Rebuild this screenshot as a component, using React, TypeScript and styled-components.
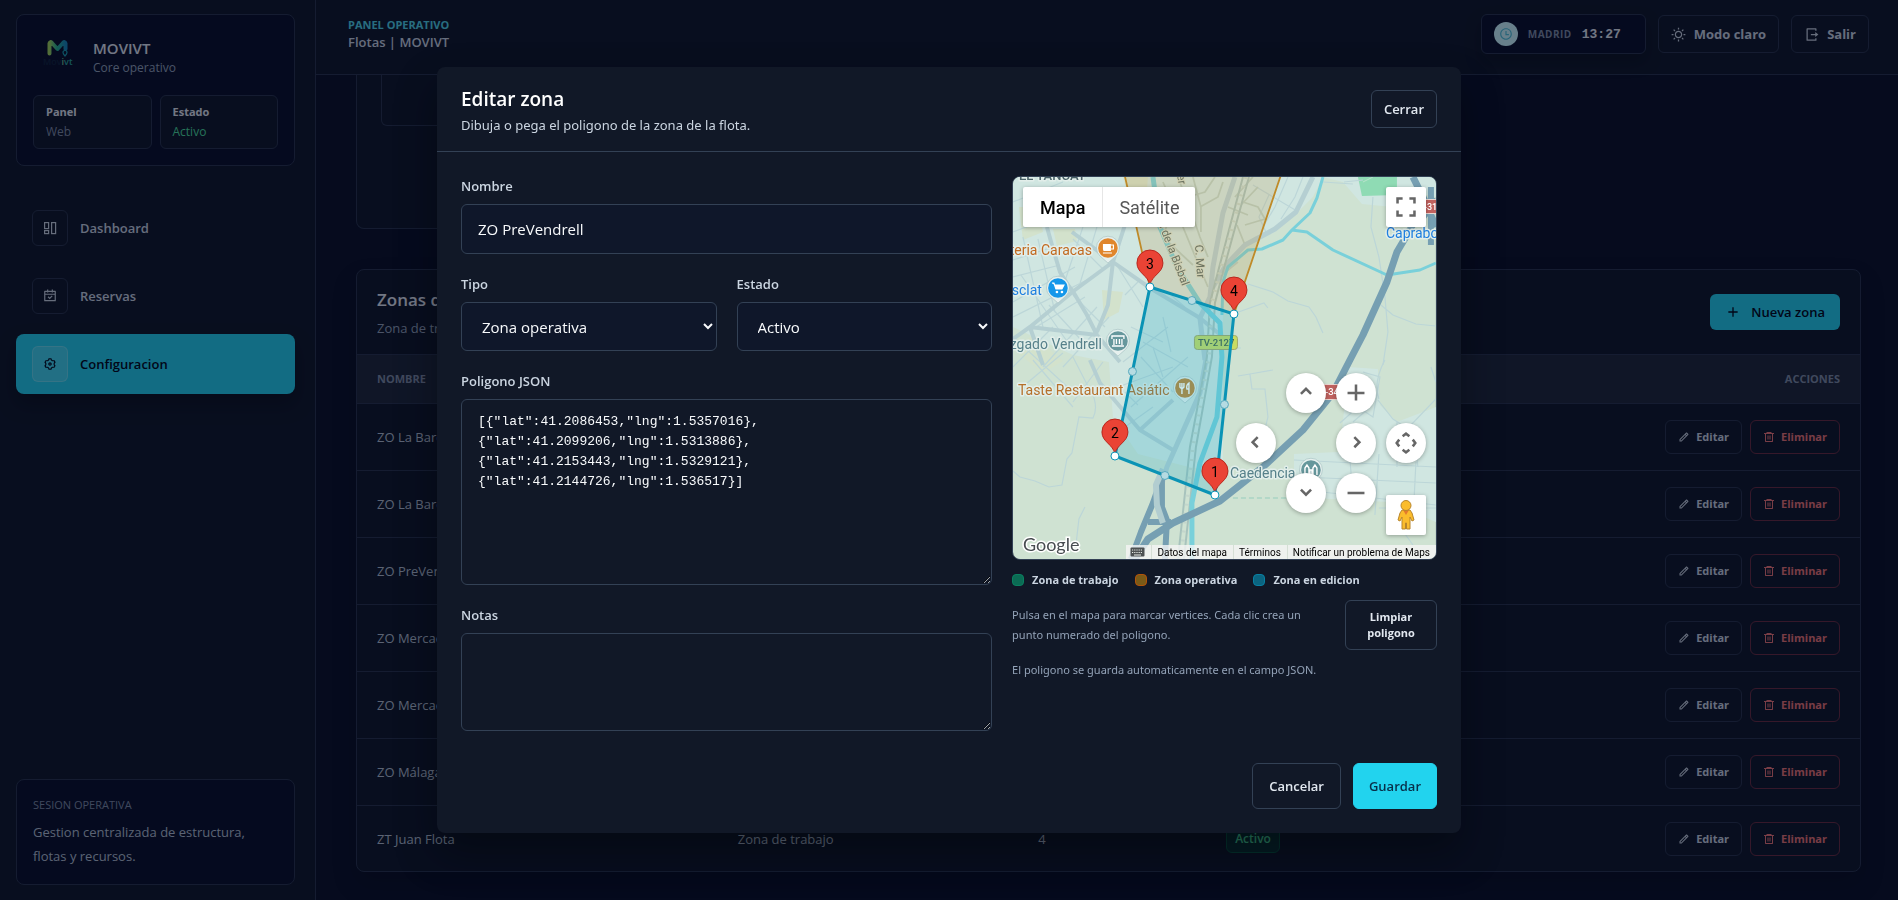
import { FC, ReactNode, useState } from 'react';
import styled, { createGlobalStyle, css } from 'styled-components';
import {
    RiAddLine,
    RiCalendarCheckLine,
    RiDeleteBin6Line,
    RiLogoutBoxRLine,
    RiPencilLine,
    RiSettings3Line,
    RiSunLine,
    RiTimeLine,
} from 'react-icons/ri';

type Zone = {
    id: number;
    name: string;
    type: string;
    points: number;
    status: string;
};

type Point = { x: number; y: number };

const colors = {
    page: '#0a1024',
    surface: '#0f1726',
    panel: '#080f27',
    modal: '#111827',
    field: '#0f172a',
    head: '#1e2737',
    border: '#28334a',
    fieldBorder: '#334155',
    text: '#e2e8f0',
    soft: '#cbd5e1',
    cell: '#b4c0d0',
    muted: '#94a3b8',
    dim: '#7f8ca3',
    accent: '#22d3ee',
    danger: '#ee7474',
    success: '#4ade9b',
};

const fonts = {
    body: "'Open Sans', 'Noto Sans', sans-serif",
    wide: "'Noto Sans', 'Open Sans', sans-serif",
    mono: "'Liberation Mono', monospace",
    map: 'Roboto, sans-serif',
};

const GlobalStyle = createGlobalStyle`
    * {
        box-sizing: border-box;
    }

    body {
        margin: 0;
        background-color: ${colors.page};
        color: ${colors.text};
        font-family: ${fonts.body};
        font-size: 13px;
    }

    button,
    input,
    select,
    textarea {
        font-family: inherit;
    }

    p,
    h1,
    h2 {
        margin: 0;
    }
`;

const Layout = styled.div`
    display: flex;
    height: 100vh;
    overflow: hidden;
`;

const Sidebar = styled.aside`
    display: flex;
    flex-direction: column;
    flex: 0 0 316px;
    padding: 14px 20px 15px 16px;
    border-right: 1px solid ${colors.border};
    background-color: ${colors.surface};
`;

const SideCard = styled.section`
    padding: 16px;
    border: 1px solid ${colors.border};
    border-radius: 8px;
    background-color: ${colors.panel};
`;

const Brand = styled.div`
    display: flex;
    align-items: center;
    gap: 12px;
    height: 48px;
    margin-bottom: 16px;
`;

const BrandText = styled.div`
    padding-top: 4px;
`;

const BrandName = styled.p`
    font-size: 15px;
    font-weight: 600;
    line-height: 22px;
`;

const BrandNote = styled.p`
    color: ${colors.muted};
    font-size: 12px;
    line-height: 18px;
`;

const Stats = styled.div`
    display: grid;
    grid-template-columns: 1fr 1fr;
    gap: 8px;
`;

const Stat = styled.div<{ $color: string }>`
    padding: 6px 12px;
    border: 1px solid ${colors.border};
    border-radius: 6px;
    background-color: ${colors.surface};
    font-size: 12px;
    line-height: 20px;
    color: ${(props) => props.$color};

    strong {
        display: block;
        color: ${colors.text};
        font-size: 11px;
        font-weight: 700;
    }
`;

const Nav = styled.nav`
    display: flex;
    flex-direction: column;
    gap: 8px;
    margin-top: 32px;
`;

const NavLink = styled.a<{ $active?: boolean }>`
    display: flex;
    align-items: center;
    gap: 12px;
    padding: 12px 16px;
    border-radius: 8px;
    background-color: ${(props) => (props.$active ? colors.accent : 'transparent')};
    box-shadow: ${(props) => (props.$active ? '0 10px 20px rgba(0, 0, 0, 0.3)' : 'none')};
    color: ${(props) => (props.$active ? '#020617' : colors.soft)};
    font-size: 13px;
    font-weight: 600;
    text-decoration: none;
`;

const NavIcon = styled.span<{ $active?: boolean }>`
    display: grid;
    place-items: center;
    width: 36px;
    height: 36px;
    border: 1px solid ${(props) => (props.$active ? 'rgba(255, 255, 255, 0.2)' : colors.border)};
    border-radius: 6px;
    background-color: ${(props) => (props.$active ? 'rgba(255, 255, 255, 0.15)' : 'transparent')};
    font-size: 14px;
`;

const Session = styled(SideCard)`
    margin-top: auto;
`;

const SessionTitle = styled.p`
    margin-bottom: 6px;
    color: ${colors.dim};
    font-size: 11px;
    line-height: 18px;
`;

const SessionText = styled.p`
    color: ${colors.cell};
    font-size: 13px;
    line-height: 24px;
`;

const Content = styled.div`
    display: flex;
    flex-direction: column;
    flex: 1;
    min-width: 0;
`;

const Topbar = styled.header`
    display: flex;
    align-items: center;
    justify-content: space-between;
    min-height: 75px;
    padding: 14px 29px 20px 32px;
    border-bottom: 1px solid ${colors.border};
    background-color: ${colors.surface};
`;

const PageName = styled.div`
    padding-bottom: 2px;
`;

const Eyebrow = styled.p`
    color: #4fd5e8;
    font-size: 11px;
    font-weight: 700;
    line-height: 17px;
`;

const Crumb = styled.p`
    color: ${colors.soft};
    font-size: 13px;
    font-weight: 600;
    line-height: 18px;
`;

const TopActions = styled.div`
    display: flex;
    align-items: center;
    gap: 12px;
`;

const Clock = styled.div`
    display: flex;
    align-items: center;
    gap: 10px;
    width: 165px;
    height: 40px;
    padding: 0 12px;
    border: 1px solid ${colors.border};
    border-radius: 6px;
    background-color: ${colors.panel};
    box-shadow: 0 8px 16px rgba(0, 0, 0, 0.25);

    small {
        color: ${colors.dim};
        font-size: 10px;
        font-weight: 700;
        letter-spacing: 0.5px;
    }

    time {
        font-family: ${fonts.mono};
        font-size: 13px;
        font-weight: 700;
    }
`;

const ClockBadge = styled.span`
    display: grid;
    place-items: center;
    width: 24px;
    height: 24px;
    border-radius: 50%;
    background-color: #cffafe;
    color: #4fc3d9;
    font-size: 14px;
`;

const buttonBase = css`
    display: inline-flex;
    align-items: center;
    justify-content: center;
    border: 1px solid ${colors.fieldBorder};
    border-radius: 6px;
    background-color: transparent;
    color: ${colors.soft};
    font-size: 13px;
    font-weight: 600;
    cursor: pointer;
`;

const TopButton = styled.button`
    ${buttonBase}
    gap: 8px;
    height: 38px;
    padding: 0 12px;
    border-color: ${colors.border};
    font-weight: 700;

    svg {
        font-size: 15px;
    }
`;

const Main = styled.main`
    display: flex;
    flex-direction: column;
    gap: 40px;
    padding: 0 37px 28px 40px;
    overflow: hidden;
`;

const UpperCard = styled.section`
    width: 60%;
    height: 154px;
    padding: 0 24px;
    border: 1px solid ${colors.border};
    border-top: 0;
    border-radius: 0 0 8px 8px;
    background-color: ${colors.surface};
`;

const UpperInner = styled.div`
    height: 51px;
    border: 1px solid ${colors.border};
    border-top: 0;
    border-radius: 0 0 6px 6px;
`;

const TableCard = styled.section`
    border: 1px solid ${colors.border};
    border-radius: 8px;
    background-color: ${colors.surface};
    box-shadow: 0 12px 24px rgba(0, 0, 0, 0.2);
    overflow: hidden;
`;

const TableHeader = styled.div`
    display: flex;
    align-items: center;
    justify-content: space-between;
    padding: 16px 20px;
`;

const TableTitle = styled.h2`
    font-size: 17px;
    font-weight: 600;
    line-height: 28px;
`;

const TableNote = styled.p`
    margin-top: 4px;
    color: ${colors.muted};
    font-size: 13px;
    line-height: 20px;
`;

const NewButton = styled.button`
    ${buttonBase}
    gap: 10px;
    height: 36px;
    padding: 0 15px;
    border: 0;
    background-color: ${colors.accent};
    color: #020617;

    svg {
        font-size: 16px;
    }
`;

const Table = styled.table`
    width: 100%;
    border-collapse: collapse;
    table-layout: fixed;

    th,
    td {
        padding: 0 20px;
        text-align: left;
    }

    th {
        height: 49px;
        border-top: 1px solid ${colors.border};
        background-color: ${colors.head};
        color: ${colors.dim};
        font-size: 11px;
        font-weight: 700;
    }

    td {
        height: 67px;
        border-top: 1px solid ${colors.border};
        color: ${colors.cell};
        font-size: 13px;
    }

    th:last-child {
        text-align: right;
    }
`;

const Status = styled.span`
    display: inline-block;
    padding: 4px 8px;
    border: 1px solid #06573f;
    border-radius: 6px;
    background-color: #082f2e;
    color: ${colors.success};
    font-size: 12px;
    font-weight: 600;
    line-height: 18px;
`;

const RowActions = styled.div`
    display: flex;
    justify-content: flex-end;
    gap: 8px;
`;

const RowButton = styled.button<{ $danger?: boolean }>`
    ${buttonBase}
    gap: 6px;
    height: 34px;
    padding: 0 12px;
    border-color: ${(props) => (props.$danger ? '#6b2b3c' : colors.border)};
    color: ${(props) => (props.$danger ? colors.danger : colors.soft)};
    font-size: 11px;
    font-weight: 700;

    svg {
        font-size: 12px;
    }
`;

const Overlay = styled.div`
    position: fixed;
    inset: 0;
    display: flex;
    align-items: center;
    justify-content: center;
    background-color: rgba(2, 6, 23, 0.5);
`;

const Modal = styled.section`
    width: 100%;
    max-width: 1024px;
    border-radius: 8px;
    background-color: ${colors.modal};
    box-shadow: 0 20px 40px rgba(0, 0, 0, 0.35);
`;

const ModalHeader = styled.header`
    display: flex;
    align-items: center;
    justify-content: space-between;
    padding: 16px 24px;
    border-bottom: 1px solid ${colors.fieldBorder};
`;

const ModalTitle = styled.h1`
    color: #fff;
    font-size: 19px;
    font-weight: 600;
    line-height: 32px;
`;

const ModalNote = styled.p`
    color: ${colors.soft};
    font-family: ${fonts.wide};
    font-size: 13px;
    line-height: 20px;
`;

const CloseButton = styled.button`
    ${buttonBase}
    height: 38px;
    padding: 0 12px;
    color: ${colors.text};
`;

const ModalForm = styled.form`
    padding: 24px;
`;

const Columns = styled.div`
    display: grid;
    grid-template-columns: minmax(0, 5fr) minmax(0, 4fr);
    gap: 20px;
`;

const Fields = styled.div`
    display: grid;
    grid-template-columns: 1fr 1fr;
    align-content: start;
    gap: 20px;
`;

const Field = styled.div<{ $wide?: boolean }>`
    display: flex;
    flex-direction: column;
    gap: 8px;
    grid-column: ${(props) => (props.$wide ? '1 / -1' : 'auto')};
`;

const Label = styled.label`
    color: ${colors.soft};
    font-size: 13px;
    font-weight: 600;
    line-height: 20px;
`;

const fieldBase = css`
    width: 100%;
    padding: 12px 16px;
    border: 1px solid ${colors.fieldBorder};
    border-radius: 6px;
    background-color: ${colors.field};
    color: #f8fafc;
    font-size: 15px;

    &:focus {
        outline: 2px solid ${colors.accent};
    }
`;

const Input = styled.input`
    ${fieldBase}
    height: 50px;
`;

const Select = styled.select`
    ${fieldBase}
    height: 49px;
`;

const TextArea = styled.textarea<{ $height: number; $mono?: boolean }>`
    ${fieldBase}
    display: block;
    height: ${(props) => props.$height}px;
    background-color: ${colors.modal};
    font-family: ${(props) => (props.$mono ? fonts.mono : fonts.body)};
    font-size: 13px;
    line-height: 20px;
    resize: vertical;
`;

const MapColumn = styled.div`
    display: flex;
    flex-direction: column;
    gap: 12px;
`;

const Legend = styled.ul`
    display: flex;
    gap: 16px;
    margin: 0;
    padding: 0;
    list-style: none;
    color: ${colors.soft};
    font-size: 11px;
    font-weight: 700;
    line-height: 16px;

    li {
        display: flex;
        align-items: center;
        gap: 8px;
    }
`;

const Swatch = styled.span<{ $fill: string; $border: string }>`
    width: 12px;
    height: 12px;
    border: 1px solid ${(props) => props.$border};
    border-radius: 4px;
    background-color: ${(props) => props.$fill};
`;

const HintRow = styled.div`
    display: flex;
    align-items: center;
    justify-content: space-between;
    gap: 24px;
`;

const Hint = styled.p`
    color: ${colors.muted};
    font-family: ${fonts.wide};
    font-size: 11px;
    line-height: 20px;
`;

const HintEnd = styled(Hint)`
    line-height: 16px;
`;

const ClearButton = styled.button`
    ${buttonBase}
    flex: 0 0 92px;
    height: 50px;
    color: ${colors.text};
    font-size: 11px;
    font-weight: 700;
    line-height: 16px;
`;

const ModalFooter = styled.footer`
    display: flex;
    justify-content: flex-end;
    gap: 12px;
    margin-top: 32px;
`;

const FooterButton = styled.button<{ $primary?: boolean }>`
    ${buttonBase}
    height: 46px;
    padding: 0 ${(props) => (props.$primary ? 15 : 16)}px;
    border-color: ${(props) => (props.$primary ? colors.accent : colors.fieldBorder)};
    background-color: ${(props) => (props.$primary ? colors.accent : 'transparent')};
    color: ${(props) => (props.$primary ? '#082f49' : colors.text)};
`;

const MapFrame = styled.div`
    position: relative;
    height: 384px;
    border: 1px solid ${colors.fieldBorder};
    border-radius: 8px;
    overflow: hidden;
    font-family: ${fonts.map};
`;

const MapDrawing = styled.svg`
    display: block;
    width: 100%;
    height: 100%;
`;

const MapTypes = styled.div`
    position: absolute;
    top: 10px;
    left: 10px;
    display: flex;
    border-radius: 2px;
    background-color: #fff;
    box-shadow: 0 1px 4px rgba(0, 0, 0, 0.3);
`;

const MapType = styled.button<{ $active?: boolean }>`
    height: 40px;
    padding: 0 ${(props) => (props.$active ? 17 : 16)}px;
    border: 0;
    border-left: ${(props) => (props.$active ? '0' : '1px solid #e6e6e6')};
    background-color: transparent;
    color: ${(props) => (props.$active ? '#000' : '#565656')};
    font-family: ${fonts.map};
    font-size: 18px;
    font-weight: ${(props) => (props.$active ? 500 : 400)};
`;

// Map controls float over the canvas, anchored to its right edge
const MapControl = styled.button<{ $right: number; $top?: number; $bottom?: number; $round?: boolean }>`
    position: absolute;
    right: ${(props) => props.$right}px;
    top: ${(props) => (props.$top === undefined ? 'auto' : `${props.$top}px`)};
    bottom: ${(props) => (props.$bottom === undefined ? 'auto' : `${props.$bottom}px`)};
    display: grid;
    place-items: center;
    width: 40px;
    height: 40px;
    padding: 0;
    border: 0;
    border-radius: ${(props) => (props.$round ? '50%' : '2px')};
    background-color: #fff;
    box-shadow: 0 1px 4px rgba(0, 0, 0, 0.3);
`;

const MapCredits = styled.div`
    position: absolute;
    right: 0;
    bottom: 0;
    display: flex;
    align-items: center;
    height: 14px;
    padding-left: 4px;
    background-color: rgba(245, 245, 245, 0.8);

    a,
    button {
        display: flex;
        align-items: center;
        height: 14px;
        padding: 0 6px 0 5px;
        border: 0;
        border-left: 1px solid #d5dfd5;
        background: none;
        color: #000;
        font-family: ${fonts.map};
        font-size: 10px;
        text-decoration: none;
    }

    button:first-child {
        padding: 0 6px 0 0;
        border: 0;
    }
`;

const zones: Zone[] = [
    { id: 1, name: 'ZO La Barca', type: 'Zona operativa', points: 4, status: 'Activo' },
    { id: 2, name: 'ZO La Barca', type: 'Zona operativa', points: 4, status: 'Activo' },
    { id: 3, name: 'ZO PreVendrell', type: 'Zona operativa', points: 4, status: 'Activo' },
    { id: 4, name: 'ZO Mercado', type: 'Zona operativa', points: 4, status: 'Activo' },
    { id: 5, name: 'ZO Mercado', type: 'Zona operativa', points: 4, status: 'Activo' },
    { id: 6, name: 'ZO Málaga', type: 'Zona operativa', points: 4, status: 'Activo' },
    { id: 7, name: 'ZT Juan Flota', type: 'Zona de trabajo', points: 4, status: 'Activo' },
];

const initialPolygon = `[{"lat":41.2086453,"lng":1.5357016},
{"lat":41.2099206,"lng":1.5313886},
{"lat":41.2153443,"lng":1.5329121},
{"lat":41.2144726,"lng":1.536517}]`;

const vertices: Point[] = [
    { x: 202, y: 318 },
    { x: 102, y: 279 },
    { x: 137, y: 110 },
    { x: 221, y: 137 },
];

const midpoints = vertices.map((v, i) => {
    const next = vertices[(i + 1) % vertices.length];
    return { x: (v.x + next.x) / 2, y: (v.y + next.y) / 2 };
});

const Logo: FC = () => (
    <svg width="48" height="48" viewBox="0 0 48 48" role="img" aria-label="Movivt">
        <defs>
            <linearGradient id="logo" x1="0" x2="1">
                <stop offset="0" stopColor="#a5d85a" />
                <stop offset="0.45" stopColor="#27b58c" />
                <stop offset="1" stopColor="#1787b8" />
            </linearGradient>
        </defs>
        <path d="M16.500 22.500V12.500Q17 10 19 12L24.500 18L30 12Q32 10 32.500 12.500V18" fill="none" stroke="url(#logo)" strokeWidth="4" strokeLinecap="round" strokeLinejoin="round" />
        <path d="M32 19.500a2 2 0 0 1 2 2c0 1.400-2 3.500-2 3.500s-2-2.100-2-3.500a2 2 0 0 1 2-2z" fill="none" stroke="#1aa0b0" strokeWidth="1.200" />
        <text x="10" y="34" fontFamily="Open Sans" fontSize="9" fontWeight="600" fill="#10233a">
            Mov<tspan fill="#76c08a">i</tspan><tspan fill="#2aa79b">vt</tspan>
        </text>
    </svg>
);

const DashboardIcon: FC = () => (
    <svg width="14" height="14" viewBox="0 0 14 14" fill="none" stroke="currentColor" strokeWidth="1.200" aria-hidden>
        <rect x="1.600" y="1.600" width="4" height="6" />
        <rect x="1.600" y="9.600" width="4" height="3" />
        <rect x="8.600" y="1.600" width="4" height="11" />
    </svg>
);

const chevrons = {
    up: 'M6 13l6-6 6 6',
    down: 'M6 8l6 6 6-6',
    left: 'M14 5l-6 6 6 6',
    right: 'M10 5l6 6-6 6',
    plus: 'M12 2v19M2 12h20',
    minus: 'M2 12h20',
    full: 'M2 8V2h6M16 2h6v6M22 16v6h-6M8 22H2v-6',
    pan: 'M8 4l4-3 4 3M8 20l4 3 4-3M4 8l-3 4 3 4M20 8l3 4-3 4',
};

const ControlIcon: FC<{ name: keyof typeof chevrons }> = ({ name }) => (
    <svg width="22" height="22" viewBox="-1 -1 26 26" fill="none" stroke="#666" strokeWidth="3" aria-hidden>
        <path d={chevrons[name]} />
    </svg>
);

const Pegman: FC = () => (
    <svg width="20" height="32" viewBox="0 0 20 32" aria-hidden>
        <path d="M6 11h8l2 3 2 7-2 1-2-4v12h-3.500v-6h-1v6H6V18l-2 4-2-1 2-7z" fill="#fbbc2c" stroke="#b8862d" strokeWidth="1" strokeLinejoin="round" />
        <path d="M7 11h6l-3 5z" fill="#e37a2c" />
        <circle cx="10" cy="6.500" r="5" fill="#fbbc2c" stroke="#b8862d" />
    </svg>
);

const Poi: FC<{ x: number; y: number; fill: string; children: ReactNode }> = ({ x, y, fill, children }) => (
    <g transform={`translate(${x} ${y})`}>
        <path d="M0 15L-8 8A11.500 11.500 0 1 1 8 8Z" fill="#e6f0ee" stroke="#a9c4c4" strokeWidth="0.700" />
        <circle r="9.800" fill={fill} />
        {children}
    </g>
);

const MapArt: FC = () => (
    <MapDrawing viewBox="0 0 423 382" preserveAspectRatio="xMidYMid slice" fontFamily={fonts.map}>
        <rect width="423" height="382" fill="#cfe2d2" />
        <path d="M0 0H310L300 20 285 35 262 55 232 68 210 92V290L180 291 125 277 100 240 96 185 60 178 0 150Z" fill="#d0e6e1" />
        <path d="M335 190l30 2 2 36 17 17 39-15v115l-48-20-94-5v-43l44-2 5-30z" fill="#d0e6e1" />
        <path d="M310 0H423V20L400 15 380 30 349 27 330 5Z" fill="#d0e6e1" />
        <path d="M345 0h39v18l-35 1z" fill="#8fdbb4" />
        <path d="M350 5l10-5" stroke="#b9e3cb" />
        <g fill="#d3e2cc">
            <path d="M6 30l20 0 4 25-20 8zM40 52l22 0 2 12-20 5zM89 113l21 2-4 20-15 8zM0 172l20-14 30 26-20 12zM110 0h25l-3 40-12 0z" />
        </g>

        {/* minor streets */}
        <g fill="none" stroke="#bcd6d8" strokeWidth="1.200">
            <path d="M0 25L50 5M0 55L34 42M0 83L40 70M0 100L47 88M0 125L62 90M0 140L80 100M10 60L30 150M25 62L42 135M60 62L90 92M70 50L52 104M84 50L66 110M20 152L72 120M30 190L84 130M50 190L96 140M0 190L40 150M36 128L70 165M60 118L92 150M8 98L58 170M0 160L60 215M20 183L60 230M60 180L78 215M90 185L60 225M13 207L50 176" />
            <path d="M105 90L130 130M112 118L125 105M118 150L150 165M110 185L155 150M105 210L160 190M118 230L175 180M150 140L158 175M158 118L172 130M130 165L175 190M112 250L140 230M128 180L160 215M140 170L150 200M112 215L125 228" />
            <path d="M78 213Q86 230 80 241L66 240 59 276 54 282 49 308 36 310 22 304 7 300 0 294M72 330L66 342 63 368M281 283L423 290M290 300L423 306M292 313L423 328M290 285L288 318M336 270L340 320M366 277L362 338M384 245V290M375 272L423 222M400 250L405 290M403 285L400 345M327 246L345 230 360 240 367 200 350 195M340 245L355 232M366 331H423M380 340L400 368M225 199L237 197 260 193M237 197L239 212H252L255 240 252 252 256 250M365 223L380 242 400 255M372 183Q360 205 366 222M418 190L423 205" />
            <path d="M235 107L260 115 275 124 296 130 303 140 310 156M220 137L251 126 255 131M360 20L358 50 366 80 372 120 375 155 370 188M368 128L380 138 403 147 423 149M331 5L350 3M275 0L262 30 250 50M290 0L282 20 268 42M240 8L284 34M256 18L246 40 253 55M310 5L340 7M219 171H228" />
        </g>
        <g fill="none" stroke="#b9cfc4" strokeWidth="1.800">
            <path d="M165 0L180 40 187 60 195 80M150 5L170 50 195 110M187 30L205 20 210 5M180 0L188 30 188 55M230 25L245 30 252 42 232 48M222 20L240 0M224 48L232 68M215 30L235 38M225 85L210 97M245 10L228 28M202 0L192 15 175 20M160 30L150 60 180 88" />
        </g>

        {/* town roads */}
        <g fill="none" stroke="#b5cfd2" strokeWidth="4" strokeLinejoin="round">
            <path d="M34 50L39 68 47 95 55 108 61 116 74 138 84 158M100 85L62 113 17 150 0 162M59 55L100 85 137 111 187 141 210 160M112 48L100 85 95 128 84 155M17 150L84 158M17 150L30 188M77 183L87 206 127 253 160 273M160 223L127 253M84 158L107 185" />
            <path d="M193 183L187 216 154 290 144 323M222 0L210 36 200 90 197 120 187 141 192 183M300 0L283 35 262 52 232 68 213 88 197 115" strokeWidth="5" />
        </g>
        <g fill="none" stroke="#a8c3bd" strokeWidth="2">
            <path d="M230 0L205 95 197 126 194 180 177 270 165 382M236 0L210 95 202 126 199 180 183 270 171 382" />
            <path d="M233 0L207 95 199 126 196 180 180 270 168 382" stroke="#c3d6cc" strokeWidth="4" strokeDasharray="2 7" />
        </g>

        {/* waterways */}
        <g fill="none" stroke="#79d0da" strokeWidth="4" strokeLinejoin="round">
            <path d="M140 0L147 50 164 90 187 126 207 146 209 180 204 240 187 286 179 326V382" strokeWidth="5" />
            <path d="M310 0L304 21 297 36 279 53 270 63 249 72 235 73 215 90 210 105 209 138M279 53L294 55 320 73 374 98 407 93 423 86" strokeWidth="3" />
        </g>

        {/* highways */}
        <g fill="none" stroke="#769fb2" strokeWidth="7" strokeLinejoin="round">
            <path d="M400 0L412 24 423 50M412 24L397 53 384 75 374 105 350 158 337 183 320 216 290 253 250 290 207 324 160 346 135 362 122 382" />
            <path d="M149 300L140 326 128 355 118 382M149 303L149 330 154 343 152 382M135 345H158" strokeWidth="6" />
            <path d="M423 22L405 48M418 10V68" strokeWidth="6" />
            <path d="M150 292L143 308 144 328 150 346" stroke="#b2cdd0" strokeWidth="6" />
        </g>
        <path d="M220 321H276" stroke="#96cdbd" strokeDasharray="5 3" />

        <g fontSize="14" stroke="#e2eeea" strokeWidth="3" paintOrder="stroke" strokeLinejoin="round">
            <text x="6" y="3" fontSize="13" fontWeight="500" fill="#4a6267">EL TANCAT</text>
            <text x="79" y="78" textAnchor="end" fill="#c26a20">teria Caracas</text>
            <text x="29" y="118" textAnchor="end" fill="#1e7fe0">sclat</text>
            <text x="89" y="172" textAnchor="end" fill="#56808a">zgado Vendrell</text>
            <text x="5" y="218" fill="#b5702a">Taste Restaurant Asiátic</text>
            <text x="217" y="301" fill="#56808a">Caedencia</text>
            <text x="373" y="61" fill="#1e7fe0">Caprabo</text>
        </g>
        <g fontSize="11.500" fill="#5b6f6c" stroke="#d5e0d0" strokeWidth="2" paintOrder="stroke">
            <text transform="translate(145 46) rotate(69)">a de la Bisbal</text>
            <text transform="translate(182 68) rotate(86)">C. Mar</text>
            <text transform="translate(164 -2) rotate(80)">er</text>
        </g>
        <Poi x={95} y={71} fill="#e0862c">
            <path d="M-5-4H3V3H-4Q-5 3-5 1Z" fill="#fff" />
            <path d="M3-3h2.500v4H3M-5 5H4" fill="none" stroke="#fff" strokeWidth="1.200" />
        </Poi>
        <Poi x={45} y={111} fill="#1597ea">
            <path d="M-6-5h2l2 6h6l2-4h-9" fill="#fff" stroke="#fff" strokeWidth="1.200" />
            <circle cx="-1" cy="4" r="1.300" fill="#fff" />
            <circle cx="4" cy="4" r="1.300" fill="#fff" />
        </Poi>
        <Poi x={105} y={164} fill="#66979c">
            <path d="M-6-2V-5H6V-2M-4-2V4M4-2V4M-1.500-2V3M1.500-2V3M-6 5H6" fill="none" stroke="#fff" strokeWidth="1.300" />
        </Poi>
        <Poi x={172} y={211} fill="#c28737">
            <path d="M-5-5V-1Q-3 2-1-1V-5M-3-5V6M4 6V-5Q1-3 2 1H4" fill="none" stroke="#fff" strokeWidth="1.400" />
        </Poi>
        <Poi x={298} y={293} fill="#66979c">
            <path d="M-6 5V-2L-4-5-2-2V5M-1 5V0H1V5M2 5V-2L4-5 6-2V5" fill="none" stroke="#fff" strokeWidth="1.400" />
        </Poi>
        <g fontSize="9.500" fontWeight="500">
            <rect x="181.500" y="158.500" width="43" height="14" rx="3" fill="#c9dc62" stroke="#a3a868" />
            <text x="185" y="169" fill="#48624b">TV-2127</text>
            <rect x="408" y="22.500" width="20" height="14" fill="#c0625f" stroke="#ead5d0" />
            <text x="411" y="33" fontSize="9" fill="#fff">-31</text>
            <rect x="305" y="207.500" width="32" height="15" fill="#c0625f" stroke="#ead5d0" />
            <text x="312" y="218" fill="#fff">-34</text>
        </g>

        <path d="M111-5L137 110 221 137 269-5Z" fill="#b9862c" fillOpacity="0.180" stroke="#bf8a28" strokeWidth="1.800" />
        <polygon points={vertices.map((v) => `${v.x},${v.y}`).join(' ')} fill="#0ea5c6" fillOpacity="0.220" stroke="#0a93b5" strokeWidth="3" />
        {midpoints.map((m) => (
            <circle key={`${m.x}-${m.y}`} cx={m.x} cy={m.y} r="4" fill="#b5dbe2" stroke="#58a9bd" />
        ))}
        {vertices.map((v, i) => (
            <g key={i} transform={`translate(${v.x} ${v.y})`}>
                <path d="M0-2C-2-12-13-14-13-24A13 13 0 0 1 13-24C13-14 2-12 0-2Z" fill="#ea4335" stroke="#b9271d" />
                <text y="-18" textAnchor="middle" fontSize="14">
                    {i + 1}
                </text>
                <circle r="4" fill="#fff" stroke="#0a93b5" />
            </g>
        ))}
        <text x="10" y="374" fontSize="18" fontFamily="Lato" fontWeight="400" fill="#474c50" stroke="#fff" strokeWidth="3" paintOrder="stroke">
            Google
        </text>
    </MapDrawing>
);

const ZoneMap: FC = () => (
    <MapFrame>
        <MapArt />
        <MapTypes>
            <MapType type="button" $active>
                Mapa
            </MapType>
            <MapType type="button">Satélite</MapType>
        </MapTypes>
        <MapControl type="button" aria-label="Pantalla completa" $right={10} $top={10}>
            <ControlIcon name="full" />
        </MapControl>
        <MapControl type="button" aria-label="Mover arriba" $round $right={110} $bottom={146}>
            <ControlIcon name="up" />
        </MapControl>
        <MapControl type="button" aria-label="Acercar" $round $right={60} $bottom={146}>
            <ControlIcon name="plus" />
        </MapControl>
        <MapControl type="button" aria-label="Mover a la izquierda" $round $right={160} $bottom={96}>
            <ControlIcon name="left" />
        </MapControl>
        <MapControl type="button" aria-label="Mover a la derecha" $round $right={60} $bottom={96}>
            <ControlIcon name="right" />
        </MapControl>
        <MapControl type="button" aria-label="Controles de la cámara" $round $right={10} $bottom={96}>
            <ControlIcon name="pan" />
        </MapControl>
        <MapControl type="button" aria-label="Mover abajo" $round $right={110} $bottom={46}>
            <ControlIcon name="down" />
        </MapControl>
        <MapControl type="button" aria-label="Alejar" $round $right={60} $bottom={46}>
            <ControlIcon name="minus" />
        </MapControl>
        <MapControl type="button" aria-label="Street View" $right={10} $bottom={24}>
            <Pegman />
        </MapControl>
        <MapCredits>
            <button type="button" aria-label="Combinaciones de teclas">
                <svg width="15" height="10" viewBox="0 0 15 10" aria-hidden>
                    <rect x="0.500" y="0.500" width="14" height="9" rx="1" fill="#4d5152" />
                    <path d="M2 3h11M2 5.500h11" stroke="#e8ece8" strokeDasharray="1.200 1" />
                    <path d="M4 8h7" stroke="#e8ece8" />
                </svg>
            </button>
            <button type="button">Datos del mapa</button>
            <a href="#terminos">Términos</a>
            <a href="#notificar">Notificar un problema de Maps</a>
        </MapCredits>
    </MapFrame>
);

const ZoneModal: FC = () => {
    const [name, setName] = useState('ZO PreVendrell');
    const [polygon, setPolygon] = useState(initialPolygon);
    const [notes, setNotes] = useState('');

    return (
        <Overlay>
            <Modal role="dialog" aria-modal="true" aria-labelledby="modal-title">
                <ModalHeader>
                    <div>
                        <ModalTitle id="modal-title">Editar zona</ModalTitle>
                        <ModalNote>Dibuja o pega el poligono de la zona de la flota.</ModalNote>
                    </div>
                    <CloseButton type="button">Cerrar</CloseButton>
                </ModalHeader>
                <ModalForm onSubmit={(e) => e.preventDefault()}>
                    <Columns>
                        <Fields>
                            <Field $wide>
                                <Label htmlFor="name">Nombre</Label>
                                <Input id="name" value={name} onChange={(e) => setName(e.target.value)} />
                            </Field>
                            <Field>
                                <Label htmlFor="type">Tipo</Label>
                                <Select id="type" defaultValue="operativa">
                                    <option value="operativa">Zona operativa</option>
                                    <option value="trabajo">Zona de trabajo</option>
                                </Select>
                            </Field>
                            <Field>
                                <Label htmlFor="status">Estado</Label>
                                <Select id="status" defaultValue="activo">
                                    <option value="activo">Activo</option>
                                    <option value="inactivo">Inactivo</option>
                                </Select>
                            </Field>
                            <Field $wide>
                                <Label htmlFor="polygon">Poligono JSON</Label>
                                <TextArea id="polygon" $height={186} $mono spellCheck={false} value={polygon} onChange={(e) => setPolygon(e.target.value)} />
                            </Field>
                            <Field $wide>
                                <Label htmlFor="notes">Notas</Label>
                                <TextArea id="notes" $height={98} value={notes} onChange={(e) => setNotes(e.target.value)} />
                            </Field>
                        </Fields>
                        <MapColumn>
                            <ZoneMap />
                            <Legend>
                                <li>
                                    <Swatch $fill="#0b6b54" $border="#0a8060" />
                                    Zona de trabajo
                                </li>
                                <li>
                                    <Swatch $fill="#7a5a17" $border="#b45309" />
                                    Zona operativa
                                </li>
                                <li>
                                    <Swatch $fill="#0b6480" $border="#0880a3" />
                                    Zona en edicion
                                </li>
                            </Legend>
                            <HintRow>
                                <Hint>Pulsa en el mapa para marcar vertices. Cada clic crea un punto numerado del poligono.</Hint>
                                <ClearButton type="button" onClick={() => setPolygon('')}>
                                    Limpiar
                                    <br />
                                    poligono
                                </ClearButton>
                            </HintRow>
                            <HintEnd>El poligono se guarda automaticamente en el campo JSON.</HintEnd>
                        </MapColumn>
                    </Columns>
                    <ModalFooter>
                        <FooterButton type="button">Cancelar</FooterButton>
                        <FooterButton type="submit" $primary>
                            Guardar
                        </FooterButton>
                    </ModalFooter>
                </ModalForm>
            </Modal>
        </Overlay>
    );
};

const App: FC = () => (
    <>
        <GlobalStyle />
        <Layout>
            <Sidebar>
                <SideCard>
                    <Brand>
                        <Logo />
                        <BrandText>
                            <BrandName>MOVIVT</BrandName>
                            <BrandNote>Core operativo</BrandNote>
                        </BrandText>
                    </Brand>
                    <Stats>
                        <Stat $color={colors.dim}>
                            <strong>Panel</strong>
                            Web
                        </Stat>
                        <Stat $color={colors.success}>
                            <strong>Estado</strong>
                            Activo
                        </Stat>
                    </Stats>
                </SideCard>
                <Nav>
                    <NavLink href="#dashboard">
                        <NavIcon>
                            <DashboardIcon />
                        </NavIcon>
                        Dashboard
                    </NavLink>
                    <NavLink href="#reservas">
                        <NavIcon>
                            <RiCalendarCheckLine />
                        </NavIcon>
                        Reservas
                    </NavLink>
                    <NavLink href="#configuracion" $active>
                        <NavIcon $active>
                            <RiSettings3Line />
                        </NavIcon>
                        Configuracion
                    </NavLink>
                </Nav>
                <Session>
                    <SessionTitle>SESION OPERATIVA</SessionTitle>
                    <SessionText>Gestion centralizada de estructura, flotas y recursos.</SessionText>
                </Session>
            </Sidebar>
            <Content>
                <Topbar>
                    <PageName>
                        <Eyebrow>PANEL OPERATIVO</Eyebrow>
                        <Crumb>Flotas | MOVIVT</Crumb>
                    </PageName>
                    <TopActions>
                        <Clock>
                            <ClockBadge>
                                <RiTimeLine />
                            </ClockBadge>
                            <small>MADRID</small>
                            <time>13:27</time>
                        </Clock>
                        <TopButton type="button">
                            <RiSunLine />
                            Modo claro
                        </TopButton>
                        <TopButton type="button">
                            <RiLogoutBoxRLine />
                            Salir
                        </TopButton>
                    </TopActions>
                </Topbar>
                <Main>
                    <UpperCard>
                        <UpperInner />
                    </UpperCard>
                    <TableCard>
                        <TableHeader>
                            <div>
                                <TableTitle>Zonas de flota</TableTitle>
                                <TableNote>Zona de trabajo y zona operativa.</TableNote>
                            </div>
                            <NewButton type="button">
                                <RiAddLine />
                                Nueva zona
                            </NewButton>
                        </TableHeader>
                        <Table>
                            <colgroup>
                                <col style={{ width: '24%' }} />
                                <col style={{ width: '20%' }} />
                                <col style={{ width: '12.5%' }} />
                                <col style={{ width: '18.5%' }} />
                                <col />
                            </colgroup>
                            <thead>
                                <tr>
                                    <th>NOMBRE</th>
                                    <th>TIPO</th>
                                    <th>PUNTOS</th>
                                    <th>ESTADO</th>
                                    <th>ACCIONES</th>
                                </tr>
                            </thead>
                            <tbody>
                                {zones.map((zone) => (
                                    <tr key={zone.id}>
                                        <td>{zone.name}</td>
                                        <td>{zone.type}</td>
                                        <td>{zone.points}</td>
                                        <td>
                                            <Status>{zone.status}</Status>
                                        </td>
                                        <td>
                                            <RowActions>
                                                <RowButton type="button">
                                                    <RiPencilLine />
                                                    Editar
                                                </RowButton>
                                                <RowButton type="button" $danger>
                                                    <RiDeleteBin6Line />
                                                    Eliminar
                                                </RowButton>
                                            </RowActions>
                                        </td>
                                    </tr>
                                ))}
                            </tbody>
                        </Table>
                    </TableCard>
                </Main>
            </Content>
        </Layout>
        <ZoneModal />
    </>
);

export default App;
